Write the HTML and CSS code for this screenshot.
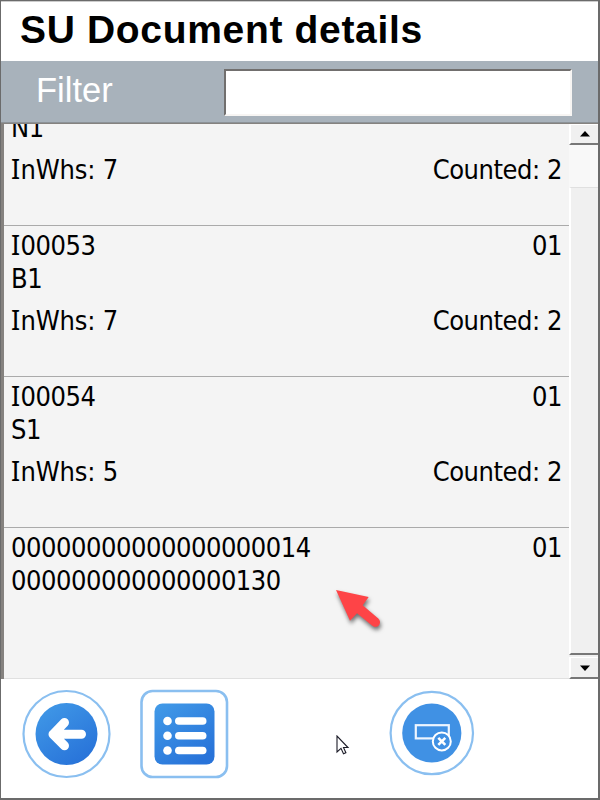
FILE: index.html
```html
<!DOCTYPE html>
<html lang="en">
<head>
<meta charset="utf-8">
<title>SU Document details</title>
<link rel="stylesheet" href="styles.css">
</head>
<body>
<main class="window">
  <header class="title"><h1>SU Document details</h1></header>
  <div class="filter">
    <label for="filter">Filter</label>
    <input id="filter" type="text">
  </div>
  <section class="list">
    <div class="rows">
      <article class="row">
        <div class="line second"><span>N1</span></div>
        <div class="line counts"><span><i>I</i>nWhs: 7</span><span>Counted: 2</span></div>
      </article>
      <article class="row">
        <div class="line"><span><i>I</i>00053</span><span>01</span></div>
        <div class="line second"><span>B1</span></div>
        <div class="line counts"><span><i>I</i>nWhs: 7</span><span>Counted: 2</span></div>
      </article>
      <article class="row">
        <div class="line"><span><i>I</i>00054</span><span>01</span></div>
        <div class="line second"><span>S1</span></div>
        <div class="line counts"><span><i>I</i>nWhs: 5</span><span>Counted: 2</span></div>
      </article>
      <article class="row last">
        <div class="line"><span>00000000000000000014</span><span>01</span></div>
        <div class="line second"><span>000000000000000130</span></div>
      </article>
    </div>
    <div class="scrollbar">
      <div class="step"><svg width="10" height="6" viewBox="0 0 10 6"><path d="M0 5.5 5 0l5 5.5z"/></svg></div>
      <div class="track"></div>
      <div class="thumb"></div>
      <div class="step down"><svg width="10" height="6" viewBox="0 0 10 6"><path d="M0 .5 5 6l5-5.500z"/></svg></div>
    </div>
  </section>
  <footer class="toolbar">
    <svg class="back" width="90" height="90" viewBox="0 0 90 90">
      <defs><linearGradient id="blue" x1="0" y1="0" x2=".7" y2="1"><stop offset="0" stop-color="#429be8"/><stop offset="1" stop-color="#2873d9"/></linearGradient></defs>
      <circle cx="45.500" cy="45" r="43" fill="#fff" stroke="#8abff0" stroke-width="2.2"/>
      <circle cx="45.500" cy="45" r="31" fill="url(#blue)"/>
      <path d="M43.500 33.500 32 45.300l11.500 11.500M32 45.300h28.500" fill="none" stroke="#fff" stroke-width="9" stroke-linecap="round" stroke-linejoin="round"/>
      <path d="m32 45.300 9-9v18z" fill="#fff"/>
    </svg>
    <svg class="menu" width="90" height="90" viewBox="0 0 90 90">
      <rect x="2.500" y="2" width="85.500" height="86" rx="11" fill="#fff" stroke="#8abff0" stroke-width="2.600"/>
      <rect x="15.500" y="14.500" width="60" height="61" rx="8" fill="url(#blue)"/>
      <g fill="#fff"><circle cx="28.500" cy="32" r="4.300"/><circle cx="28.500" cy="46.800" r="4.300"/><circle cx="28.500" cy="61.500" r="4.300"/>
      <rect x="36" y="28.200" width="31.500" height="7.600" rx="3.800"/><rect x="36" y="43" width="31.500" height="7.600" rx="3.800"/><rect x="36" y="57.700" width="31.500" height="7.600" rx="3.800"/></g>
    </svg>
    <svg class="pointer" width="14" height="21" viewBox="0 0 14 21"><path d="M1 1v16l4-3.700 2.500 5.500 2.400-1-2.400-5.300H12z" fill="#fff" stroke="#1c1c28" stroke-width="1.100"/></svg>
    <svg class="clear" width="86" height="86" viewBox="0 0 86 86">
      <circle cx="42.800" cy="43" r="41.200" fill="#fff" stroke="#8abff0" stroke-width="2.200"/>
      <circle cx="42.800" cy="43" r="29.600" fill="#4091e4"/>
      <rect x="26.800" y="35.200" width="33" height="13.200" fill="none" stroke="#eef6ff" stroke-width="2.200"/>
      <circle cx="52.800" cy="51.400" r="9" fill="#4091e4" stroke="#fff" stroke-width="2"/>
      <path d="m49.300 47.900 7 7m0-7-7 7" stroke="#fff" stroke-width="2.600"/>
    </svg>
  </footer>
  <svg class="marker" width="60" height="60" viewBox="0 0 60 60"><path d="M7 11 39.700 18 33.700 26.300 49.300 39.500a4.700 4.700 0 0 1-6 7.300L28 34.300 21 41.700z" fill="#fe4447"/></svg>
</main>
</body>
</html>
```
FILE: styles.css
```css
* { box-sizing: border-box; }
body { margin: 0; }
.window {
  position: relative;
  display: flex;
  flex-direction: column;
  width: 600px;
  height: 800px;
  border: solid #6b6b6b;
  border-width: 1px 2px 2px 1px;
  background: #fff;
  overflow: hidden;
  font-family: "Liberation Sans", sans-serif;
}
.title { height: 60px; padding: 6px 0 0 19px; border-top: 1px solid #ccc; }
h1 { margin: 0; font-size: 39px; line-height: 44px; letter-spacing: .67px; white-space: nowrap; color: #000; }
.filter {
  display: flex;
  justify-content: space-between;
  height: 62px;
  padding: 8px 26px 0 35px;
  background: #a8b2bb;
  border-bottom: 1px solid #8c9297;
}
.filter label { font-size: 34.500px; line-height: 43px; color: #fff; }
.filter input {
  width: 348px;
  height: 47px;
  border: solid;
  border-width: 2px;
  border-color: #716f6e #f7f5f3 #f7f5f3 #716f6e;
  border-radius: 0;
  background: #fff;
  outline: 0;
}
.list { display: flex; height: 556px; border: solid #85827f; border-width: 1px 0 0 3px; background: #f4f4f4; }
.rows { display: flex; flex: 1; flex-direction: column; justify-content: flex-end; overflow: hidden; }
.row {
  flex: none;
  height: 151px;
  padding: 4px 7px 0;
  border-bottom: 1px solid #aaa;
  font: 27px/32px "DejaVu Sans Condensed", "DejaVu Sans", sans-serif;
  font-stretch: condensed;
  letter-spacing: -.46px;
  color: #000;
}
.row:first-child { padding-top: 36px; }
.row.last { border-bottom-color: #e0e0e0; }
.row i { font-family: "Noto Sans", sans-serif; font-style: normal; line-height: 1; letter-spacing: .3px; }
.line { display: flex; justify-content: space-between; height: 32px; }
.second { padding-top: 1px; }
.counts { margin-top: 11px; }
.counts span:first-child { letter-spacing: -.2px; }
.scrollbar { display: flex; flex-direction: column; width: 29px; background: #f0f0f0; }
.step, .thumb { border: 1px solid #fff; border-width: 1px 0 2px 2px; border-bottom-color: #777; background: #f0f0f0; }
.step { display: flex; flex: none; align-items: center; justify-content: center; height: 21px; }
.step.down { margin-top: 2px; height: 22px; }
.track { height: 42px; background: #f8f8f8; }
.thumb { flex: 1; border-top-color: #e0e0e0; border-left-color: #fff; }
.toolbar { display: flex; flex: 1; align-items: flex-start; padding: 10px 0 0 20px; }
.menu { margin-left: 28px; }
.pointer { margin: 46px 0 0 107px; }
.clear { margin: 1px 0 0 39px; }
.marker { position: absolute; left: 328px; top: 578px; filter: drop-shadow(1px 3px 2px rgba(0,0,0,.55)); }
```
